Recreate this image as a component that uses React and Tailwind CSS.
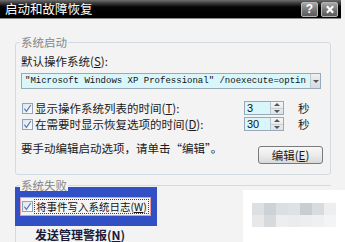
const cjk = "font-['Noto_Sans_CJK_SC','Microsoft_YaHei',sans-serif]";

const Check = () => (
  <span className="flex h-[11px] w-[11px] shrink-0 items-center justify-center border border-[#93a4b6] bg-gradient-to-br from-[#dde4ec] to-white">
    <svg viewBox="0 0 10 10" className="h-[9px] w-[9px]">
      <path d="M1.5 5.2 L3.8 8.2 L8.6 1.2" fill="none" stroke="#5b7fb8" strokeWidth="1.3" />
    </svg>
  </span>
);

const Spin = ({ value }) => (
  <div className="flex h-[14px] w-[40px] border border-[#9aa9b8] bg-[#d9f7fa]">
    <span className="flex-1 pl-[2px] font-['Liberation_Sans',sans-serif] text-[11px] leading-[12px] text-[#111]">
      {value}
    </span>
    <div className="flex w-[13px] flex-col border-l border-[#bcc5ce] bg-gradient-to-b from-[#f4f5f6] to-[#dfe2e5]">
      <span className="flex flex-1 items-center justify-center border-b border-[#c4ccd4]">
        <svg viewBox="0 0 6 3" className="h-[3px] w-[6px]"><path d="M0 3 L3 0 L6 3Z" fill="#555" /></svg>
      </span>
      <span className="flex flex-1 items-center justify-center">
        <svg viewBox="0 0 6 3" className="h-[3px] w-[6px]"><path d="M0 0 L3 3 L6 0Z" fill="#555" /></svg>
      </span>
    </div>
  </div>
);

const TitleButton = ({ children }) => (
  <span className="flex h-[15px] w-[17px] items-center justify-center rounded-[2px] border border-[#b5b5b5] bg-gradient-to-b from-[#a8a8a8] via-[#7a7a7a] to-[#5a5a5a]">
    {children}
  </span>
);

const mosaic = [
  ['#dde0e3', '#cdd2d6', '#dcdfe2', '#dfe2e5', '#c8cdd1', '#d8dcdf', '#eceef0'],
  ['#e6e8ea', '#d7dadd', '#eceef0', '#eaecee', '#eceef0', '#eff0f2', '#f3f4f5'],
];

export default function App() {
  return (
    <div className={`relative flex h-[242px] w-[345px] flex-col overflow-hidden bg-[#f3f3f3] ${cjk} text-[11.5px] text-[#1a1a1a]`}>
      {/* title bar */}
      <div className="flex h-[24px] w-[341px] items-center justify-between border-b border-[#8a8a8a] bg-gradient-to-b from-[#6e6e6e] via-[#050505] via-40% to-black pl-[5px] pr-[3px]">
        <span className="text-[12.5px] leading-[18px] text-white">启动和故障恢复</span>
        <div className="flex items-center gap-[3px]">
          <TitleButton>
            <span className="font-['Liberation_Sans',sans-serif] text-[12px] font-bold leading-none text-white">?</span>
          </TitleButton>
          <TitleButton>
            <svg viewBox="0 0 10 10" className="h-[9px] w-[10px]">
              <path d="M1.5 1.5 L8.5 8.5 M8.5 1.5 L1.5 8.5" stroke="white" strokeWidth="2.4" />
            </svg>
          </TitleButton>
        </div>
      </div>

      <div className="pl-[15px]">
        {/* 系统启动 */}
        <div className="relative mt-[23px] h-[133px] w-[316px] rounded-[3px] border border-[#d3dbe1] px-[5px] pt-[11px]">
          <span className="absolute left-[4px] top-[-7px] bg-[#f3f3f3] px-[1px] leading-[12px] text-[#858585]">系统启动</span>
          <div className="h-[14px] whitespace-nowrap leading-[14px]">
            默认操作系统(<u>S</u>):
          </div>
          <div className="mt-[5px] flex h-[16px] w-[300px] items-center border border-[#9aa9b8] bg-[#d9f7fa]">
            <span className="flex-1 overflow-hidden whitespace-nowrap pl-[3px] font-['Liberation_Mono',monospace] text-[9px] leading-[12px] text-[#111]">
              "Microsoft Windows XP Professional" /noexecute=optin
            </span>
            <span className="flex h-[14px] w-[10px] items-center justify-center border-l border-[#c0c8d0] bg-gradient-to-b from-[#eef0f2] to-[#d6dade]">
              <svg viewBox="0 0 6 3" className="h-[3px] w-[6px]"><path d="M0 0 L3 3 L6 0Z" fill="#555" /></svg>
            </span>
          </div>

          <div className="mt-[12px] flex h-[14px] items-center">
            <div className="flex w-[223px] items-center gap-[2px] pl-[1px]">
              <Check />
              <span className="whitespace-nowrap leading-[14px]">显示操作系统列表的时间(<u>T</u>):</span>
            </div>
            <Spin value="3" />
            <span className="ml-[14px] leading-[14px]">秒</span>
          </div>
          <div className="mt-[2px] flex h-[14px] items-center">
            <div className="flex w-[223px] items-center gap-[2px] pl-[1px]">
              <Check />
              <span className="whitespace-nowrap leading-[14px]">在需要时显示恢复选项的时间(<u>D</u>):</span>
            </div>
            <Spin value="30" />
            <span className="ml-[14px] leading-[14px]">秒</span>
          </div>

          <div className="mt-[10px] flex items-start justify-between pr-[2px]">
            <span className="whitespace-nowrap leading-[14px]">要手动编辑启动选项，请单击“编辑”。</span>
            <span className="mt-[5px] flex h-[18px] w-[65px] items-center justify-center rounded-[3px] border border-[#7a7a7a] bg-gradient-to-b from-[#f8f8f8] via-[#ececec] to-[#d8d8d8] leading-[14px]">
              编辑(<u>E</u>)
            </span>
          </div>
        </div>

        {/* 系统失败 */}
        <div className="relative mt-[10px] h-[60px] w-[316px] rounded-tl-[3px] border-l border-t border-[#d3dbe1]">
          <span className="absolute left-[4px] top-[-7px] bg-[#f3f3f3] px-[1px] leading-[12px] text-[#858585]">系统失败</span>
          <div className="-ml-[1px] mt-[1px] h-[39px] w-[142px] bg-[#3150c4] pl-[5px] pt-[10px]">
            <div className="flex h-[19px] w-[131px] items-center gap-[1px] border border-[#e89aa0] bg-[#f4f4f4] pl-[1px]">
              <Check />
              <span className="whitespace-nowrap border border-dotted border-[#444] px-[1px] text-[10.5px] leading-[13px] text-[#111]">
                将事件写入系统日志(<u>W</u>)
              </span>
            </div>
          </div>
          <div className="ml-[19px] mt-[2px] flex items-center gap-[3px]">
            <span className="whitespace-nowrap text-[12px] font-bold leading-[14px] text-[#1a1a3a]">发送管理警报(<u>N</u>)</span>
          </div>
        </div>
      </div>

      {/* redacted area */}
      <div className="absolute left-[243px] top-[190px] h-[52px] w-[102px] bg-white pl-[9px] pt-[13px]">
        {mosaic.map((row, i) => (
          <div key={i} className="flex">
            {row.map((c, j) => (
              <span key={j} className="h-[12px] w-[12px]" style={{ backgroundColor: c }} />
            ))}
          </div>
        ))}
      </div>
    </div>
  );
}
